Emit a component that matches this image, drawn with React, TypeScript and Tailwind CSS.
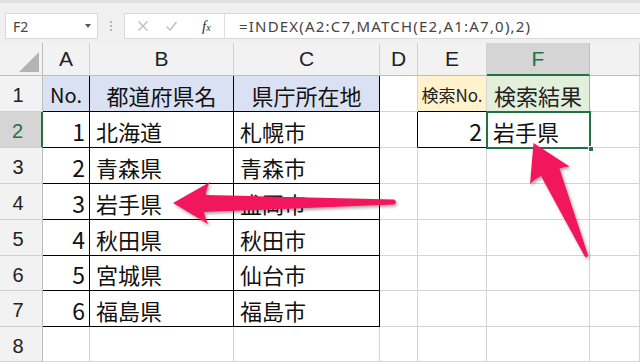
import React from "react";

const JP = "font-['Noto_Sans_CJK_JP','Noto_Sans',sans-serif]";
const GRID = "border-r-[#d4d4d4] border-b-[#d4d4d4]";

type CellProps = {
  className?: string;
  children?: React.ReactNode;
};

// one spreadsheet cell: right + bottom border, colour passed in className
const Cell = ({ className = "", children }: CellProps) => (
  <div
    className={`flex items-center overflow-hidden whitespace-nowrap border-r border-b pt-[3px] ${className}`}
  >
    {children}
  </div>
);

const ColHead = ({ label, active }: { label: string; active?: boolean }) => (
  <div
    className={
      active
        ? "flex items-center justify-center border-r border-r-[#bdbdbd] border-b-2 border-b-[#217346] bg-[#d5d5d5] text-[21px] text-[#217346] font-['Liberation_Sans',sans-serif]"
        : "flex items-center justify-center border-r border-r-[#d0d0d0] border-b border-b-[#bdbdbd] bg-[#f2f2f2] text-[21px] text-[#222] font-['Liberation_Sans',sans-serif]"
    }
  >
    {label}
  </div>
);

const RowHead = ({ n, active }: { n: number; active?: boolean }) => (
  <div
    className={
      active
        ? "flex items-center justify-center pt-[3px] pr-[6px] border-r-2 border-r-[#217346] border-b border-b-[#d0d0d0] bg-[#d5d5d5] text-[20px] text-[#217346] font-['Liberation_Sans',sans-serif]"
        : "flex items-center justify-center pt-[3px] pr-[6px] border-r border-r-[#bdbdbd] border-b border-b-[#d0d0d0] bg-[#f2f2f2] text-[20px] text-[#222] font-['Liberation_Sans',sans-serif]"
    }
  >
    {n}
  </div>
);

const prefs = [
  ["1", "北海道", "札幌市"],
  ["2", "青森県", "青森市"],
  ["3", "岩手県", "盛岡市"],
  ["4", "秋田県", "秋田市"],
  ["5", "宮城県", "仙台市"],
  ["6", "福島県", "福島市"],
];

const Toolbar = () => (
  <div className="h-[43px] bg-[#f0f0f0] border-t-[3px] border-t-[#e1e1e1] flex items-start pt-[10px]">
    <div className="ml-[5px] w-[93px] h-[26px] bg-white border border-[#d9d9d9] flex items-center justify-between pl-[7px] pr-[6px]">
      <span className="text-[14px] text-[#444] font-['Noto_Sans',sans-serif]">F2</span>
      <span className="w-0 h-0 border-l-[3px] border-r-[3px] border-t-[4px] border-l-transparent border-r-transparent border-t-[#555]" />
    </div>
    <div className="ml-[12px] mt-[8px] flex flex-col gap-[2px]">
      <span className="w-[2px] h-[2px] bg-[#b5b5b5]" />
      <span className="w-[2px] h-[2px] bg-[#b5b5b5]" />
      <span className="w-[2px] h-[2px] bg-[#b5b5b5]" />
    </div>
    <div className="ml-[12px] flex-1 h-[26px] bg-white border border-r-0 border-[#d9d9d9] flex items-center">
      <div className="w-[100px] h-full flex items-center border-r border-[#dedede]">
        <svg width="12" height="12" viewBox="0 0 12 12" className="ml-[12px]">
          <path d="M1.5 1.5 L10.5 10.5 M10.5 1.5 L1.5 10.5" stroke="#bdbdbd" strokeWidth="1.4" fill="none" />
        </svg>
        <svg width="13" height="12" viewBox="0 0 13 12" className="ml-[16px]">
          <path d="M1.5 6.5 L5 10 L11.5 2" stroke="#bdbdbd" strokeWidth="1.4" fill="none" />
        </svg>
        <span className="ml-[24px] text-[15px] italic text-[#333] font-['Liberation_Serif',serif] leading-none">
          f<span className="text-[10px]">x</span>
        </span>
      </div>
      <span className="ml-[14px] text-[15px] text-[#444] font-['Noto_Sans',sans-serif] tracking-[1.2px]">
        =INDEX(A2:C7,MATCH(E2,A1:A7,0),2)
      </span>
    </div>
  </div>
);

const Arrows = () => (
  <svg
    className="absolute left-0 top-0 pointer-events-none"
    width="640"
    height="362"
    viewBox="0 0 640 362"
  >
    <defs>
      <filter id="sh" x="-20%" y="-20%" width="140%" height="140%">
        <feDropShadow dx="1.5" dy="2" stdDeviation="1.8" floodColor="#000" floodOpacity="0.35" />
      </filter>
    </defs>
    <g fill="#f2195e" filter="url(#sh)">
      <path d="M173 203 L210 182 Q206 189 206 195 L394 199.5 Q398 202 394 204.5 L204 212 Q205 218 208 224 Z" />
      <path d="M533.5 143 L569.5 166.5 Q564 167 559.5 168.5 L588 255 Q587 259 584.5 256 L541 176 Q535 179 530 184 Z" />
    </g>
  </svg>
);

export default function App() {
  return (
    <div className="relative w-[640px] h-[362px] overflow-hidden bg-white">
      <Toolbar />
      <div className="grid grid-cols-[43px_47px_144px_146px_38px_69px_103px_50px] grid-rows-[33px_36px_36px_36px_36px_36px_35px_36px_35px]">
        {/* column headers */}
        <div className="relative border-r border-r-[#bdbdbd] border-b border-b-[#bdbdbd] bg-[#f2f2f2]">
          <span className="absolute right-[3px] bottom-[3px] w-0 h-0 [border-left:20px_solid_transparent] [border-bottom:20px_solid_#b4b4b4]" />
        </div>
        <ColHead label="A" />
        <ColHead label="B" />
        <ColHead label="C" />
        <ColHead label="D" />
        <ColHead label="E" />
        <ColHead label="F" active />
        <ColHead label="" />

        {/* row 1 */}
        <RowHead n={1} />
        <Cell className={`border-r-black border-b-black bg-[#d9e1f2] justify-center text-[20px] text-[#111] ${JP}`}>No.</Cell>
        <Cell className={`border-r-black border-b-black bg-[#d9e1f2] justify-center text-[22px] text-[#111] ${JP}`}>都道府県名</Cell>
        <Cell className={`border-r-black border-b-black bg-[#d9e1f2] justify-center text-[22px] text-[#111] ${JP}`}>県庁所在地</Cell>
        <Cell className={GRID} />
        <Cell className={`border-r-[#d4d4d4] border-b-black bg-[#fff2cc] justify-center text-[17px] text-[#222] ${JP}`}>検索No.</Cell>
        <Cell className={`border-r-[#9bb59f] border-b-black bg-[#e2efda] justify-center text-[22px] text-[#222] ${JP}`}>検索結果</Cell>
        <Cell className={GRID} />

        {/* rows 2-7 */}
        {prefs.map((p, i) => (
          <React.Fragment key={p[0]}>
            <RowHead n={i + 2} active={i === 0} />
            <Cell className={`border-r-black border-b-black justify-end pr-[4px] text-[23px] text-[#111] ${JP}`}>{p[0]}</Cell>
            <Cell className={`border-r-black border-b-black pl-[6px] text-[22px] text-[#111] ${JP}`}>{p[1]}</Cell>
            <Cell className={`border-r-black border-b-black pl-[6px] text-[22px] text-[#111] ${JP}`}>{p[2]}</Cell>
            <Cell className={i === 0 ? "border-r-black border-b-[#d4d4d4]" : GRID} />
            {i === 0 ? (
              <>
                <Cell className={`border-r-black border-b-black justify-end pr-[4px] text-[23px] text-[#111] ${JP}`}>2</Cell>
                <Cell className={`border-r-black border-b-black pl-[6px] text-[22px] text-[#111] ${JP}`}>岩手県</Cell>
              </>
            ) : (
              <>
                <Cell className={GRID} />
                <Cell className={GRID} />
              </>
            )}
            <Cell className={GRID} />
          </React.Fragment>
        ))}

        {/* row 8 */}
        <RowHead n={8} />
        <Cell className={GRID} />
        <Cell className={GRID} />
        <Cell className={GRID} />
        <Cell className={GRID} />
        <Cell className={GRID} />
        <Cell className={GRID} />
        <Cell className={GRID} />
      </div>

      {/* selection frame on F2 */}
      <div className="absolute left-[486px] top-[111px] w-[105px] h-[38px] border-2 border-[#217346] pointer-events-none" />
      <div className="absolute left-[588px] top-[146px] w-[6px] h-[6px] bg-[#217346] border border-white pointer-events-none" />

      <Arrows />
    </div>
  );
}
